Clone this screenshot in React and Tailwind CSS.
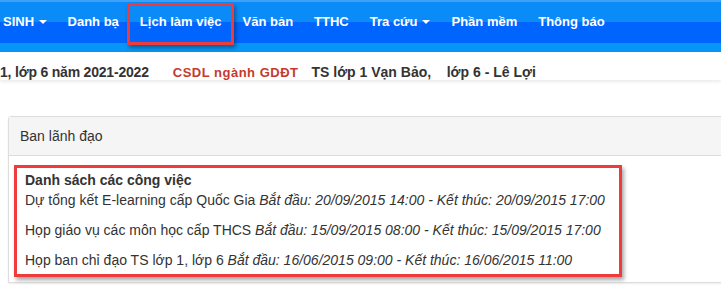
import React from 'react';

const Caret = () => (
  <span className="ml-[5px] inline-block w-0 h-0 border-l-[4px] border-r-[4px] border-t-[4px] border-l-transparent border-r-transparent border-t-white align-middle" />
);

const navItems = [
  { label: 'SINH', caret: true, first: true },
  { label: 'Danh bạ' },
  { label: 'Lịch làm việc', marked: true },
  { label: 'Văn bản' },
  { label: 'TTHC' },
  { label: 'Tra cứu', caret: true },
  { label: 'Phần mềm' },
  { label: 'Thông báo' },
];

const tasks = [
  ['Dự tổng kết E-learning cấp Quốc Gia', 'Bắt đầu: 20/09/2015 14:00 - Kết thúc: 20/09/2015 17:00'],
  ['Họp giáo vụ các môn học cấp THCS', 'Bắt đầu: 15/09/2015 08:00 - Kết thúc: 15/09/2015 17:00'],
  ['Họp ban chỉ đạo TS lớp 1, lớp 6', 'Bắt đầu: 16/06/2015 09:00 - Kết thúc: 16/06/2015 11:00'],
];

const App = () => {
  return (
    <div className="w-[721px] h-[292px] overflow-hidden bg-white font-['Liberation_Sans',Arial,sans-serif] text-[#333]">
      {/* Top navbar */}
      <nav className="h-[52px] bg-[linear-gradient(to_bottom,#3da2f7_0,#3da2f7_2px,#0a8bf7_2px,#0a8bf7_22px,#0064ff_22px,#0064ff_43px,#0796f5_43px)]">
        <div className="flex h-[44px] items-center">
          {navItems.map((item) => (
            <div
              key={item.label}
              className={`relative flex h-full items-center text-[13px] font-bold text-white whitespace-nowrap ${item.first ? 'pl-[3px] pr-[10px]' : 'px-[10.5px]'}`}
            >
              {item.label}
              {item.caret && <Caret />}
              {item.marked && (
                <span className="absolute top-[3px] bottom-[-1px] left-[-2px] right-[-2px] border-[3px] border-[#ee3b3b] shadow-[2px_3px_4px_rgba(0,0,0,0.35)]" />
              )}
            </div>
          ))}
        </div>
      </nav>

      {/* Info strip */}
      <div className="h-[28px] pt-[10px] flex items-baseline font-bold whitespace-nowrap shadow-[0_2px_3px_rgba(0,0,0,0.08)]">
        <span className="text-[14px] leading-[20px] tracking-[-0.2px]">1, lớp 6 năm 2021-2022</span>
        <span className="ml-[24px] text-[13px] tracking-[0.5px] text-[#c53a2e]">CSDL ngành GDĐT</span>
        <span className="ml-[13px] text-[14px]">TS lớp 1 Vạn Bảo,&nbsp;&nbsp;&nbsp; lớp 6 - Lê Lợi</span>
      </div>

      {/* Panel */}
      <div className="mt-[36px] ml-[8px] w-[760px] border border-[#ddd] rounded-tl-[3px] bg-white shadow-[0_1px_2px_rgba(0,0,0,0.08)]">
        <div className="h-[39px] flex items-center px-[11px] bg-[#f5f5f5] border-b border-[#ddd] text-[14px]">
          Ban lãnh đạo
        </div>
        <div className="pt-[9px] px-[5px] pb-[5px]">
          <div className="w-[608px] border-[3px] border-[#ee3b3b] pl-[8px] pt-[2px] pb-[4px] text-[14px] leading-[20px] shadow-[2px_3px_4px_rgba(0,0,0,0.35)]">
            <div className="font-bold">Danh sách các công việc</div>
            {tasks.map(([name, time], i) => (
              <p key={name} className={`whitespace-nowrap ${i < tasks.length - 1 ? 'mb-[10px]' : ''}`}>
                {name} <i>{time}</i>
              </p>
            ))}
          </div>
        </div>
      </div>
    </div>
  );
};

export default App;
